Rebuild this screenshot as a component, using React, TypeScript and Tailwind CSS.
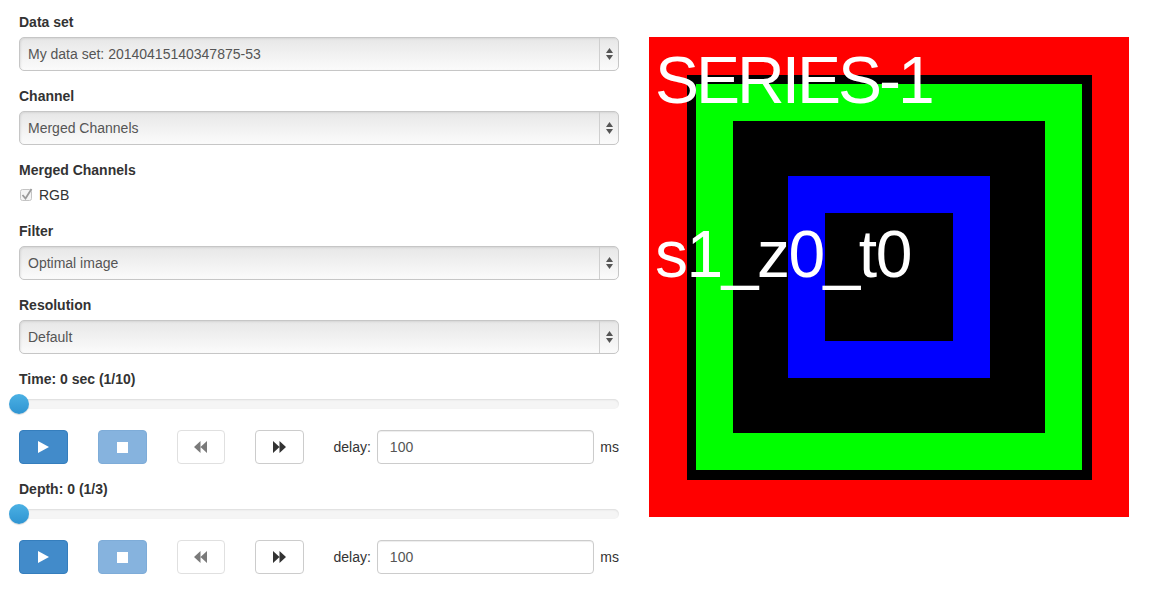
import React from "react";

const font = { fontFamily: '"Liberation Sans", Arial, Helvetica, sans-serif' };

function Select({ value }: { value: string }) {
  return (
    <div className="relative h-[34px] w-[600px] rounded-[5px] border border-[#c6c6c6] bg-gradient-to-b from-[#e7e7e7] via-[#f1f1f1] to-[#fbfbfb] shadow-[inset_1px_1px_2px_rgba(0,0,0,0.08)] flex items-center">
      <span className="pl-[8px] text-[14px] text-[#555] flex-1">{value}</span>
      <div className="h-full w-[19px] border-l border-[#cfcfcf] flex flex-col items-center justify-center gap-[2px]">
        <svg width="7" height="5" viewBox="0 0 7 5"><path d="M3.5 0 L7 5 L0 5 Z" fill="#555" /></svg>
        <svg width="7" height="5" viewBox="0 0 7 5"><path d="M0 0 L7 0 L3.5 5 Z" fill="#555" /></svg>
      </div>
    </div>
  );
}

function Label({ children }: { children: React.ReactNode }) {
  return <div className="h-[20px] leading-[20px] text-[14px] font-bold text-[#333] mb-[5px]">{children}</div>;
}

function Slider() {
  return (
    <div className="relative h-[30px] w-[600px] flex items-center">
      <div className="h-[10px] w-full rounded-[5px] bg-[#f5f5f5] shadow-[inset_0_1px_2px_rgba(0,0,0,0.1)]" />
      <div className="absolute left-[-10px] top-[5px] h-[20px] w-[20px] rounded-full bg-gradient-to-b from-[#4bb1e4] to-[#2f94d1] shadow-[0_1px_1px_rgba(0,0,0,0.15)]" />
    </div>
  );
}

function Controls() {
  return (
    <div className="flex items-center h-[34px]">
      <div className="h-[34px] w-[49px] rounded-[4px] bg-[#428bca] border border-[#357ebd] flex items-center justify-center">
        <svg width="11" height="12" viewBox="0 0 11 12"><path d="M0 0 L11 6 L0 12 Z" fill="#fff" /></svg>
      </div>
      <div className="ml-[30px] h-[34px] w-[49px] rounded-[4px] bg-[#86b3de] border border-[#7eacd8] flex items-center justify-center">
        <div className="h-[11px] w-[11px] bg-white" />
      </div>
      <div className="ml-[30px] h-[34px] w-[48px] rounded-[4px] bg-white border border-[#e0e0e0] flex items-center justify-center">
        <svg width="13" height="12" viewBox="0 0 13 12"><path d="M6.5 0 L0 6 L6.5 12 Z M13 0 L6.5 6 L13 12 Z" fill="#7a7a7a" /></svg>
      </div>
      <div className="ml-[30px] h-[34px] w-[49px] rounded-[4px] bg-white border border-[#cccccc] flex items-center justify-center">
        <svg width="13" height="12" viewBox="0 0 13 12"><path d="M0 0 L6.5 6 L0 12 Z M6.5 0 L13 6 L6.5 12 Z" fill="#333" /></svg>
      </div>
      <span className="ml-[30px] text-[14px] text-[#333]">delay:</span>
      <div className="ml-[6px] h-[34px] w-[218px] rounded-[4px] border border-[#cccccc] bg-white flex items-center pl-[12px] text-[14px] text-[#555] shadow-[inset_0_1px_1px_rgba(0,0,0,0.075)]">
        100
      </div>
      <span className="ml-[6px] text-[14px] text-[#333]">ms</span>
    </div>
  );
}

export default function App() {
  return (
    <div className="w-[1150px] h-[612px] bg-white flex pl-[19px] pt-[12px] text-[#333]" style={font}>
      <div className="w-[600px] flex flex-col">
        <Label>Data set</Label>
        <Select value="My data set: 20140415140347875-53" />
        <div className="mt-[15px]"><Label>Channel</Label></div>
        <Select value="Merged Channels" />
        <div className="mt-[15px]"><Label>Merged Channels</Label></div>
        <div className="h-[20px] flex items-center">
          <svg width="14" height="14" viewBox="0 0 14 14" className="ml-[1px]">
            <rect x="0.5" y="1.5" width="11" height="11" rx="2" fill="#f4f4f4" stroke="#c4c4c4" />
            <path d="M2.5 7 L5.5 10.5 L11.5 1" fill="none" stroke="#9a9a9a" strokeWidth="1.8" />
          </svg>
          <span className="ml-[5px] text-[14px] text-[#333]">RGB</span>
        </div>
        <div className="mt-[16px]"><Label>Filter</Label></div>
        <Select value="Optimal image" />
        <div className="mt-[15px]"><Label>Resolution</Label></div>
        <Select value="Default" />
        <div className="mt-[15px] h-[20px] leading-[20px] text-[14px] font-bold">Time: 0 sec (1/10)</div>
        <Slider />
        <div className="mt-[11px]"><Controls /></div>
        <div className="mt-[15px] h-[20px] leading-[20px] text-[14px] font-bold">Depth: 0 (1/3)</div>
        <Slider />
        <div className="mt-[11px]"><Controls /></div>
      </div>
      <div className="ml-[30px] mt-[25px]">
        <div className="relative w-[480px] h-[480px] bg-[#ff0000] pt-[38px] pl-[38px]">
          <div className="w-[405px] h-[405px] bg-black pt-[9px] pl-[9px]">
            <div className="w-[386px] h-[386px] bg-[#00ff00] pt-[37px] pl-[37px]">
              <div className="w-[312px] h-[312px] bg-black pt-[55px] pl-[55px]">
                <div className="w-[202px] h-[202px] bg-[#0000ff] pt-[37px] pl-[37px]">
                  <div className="w-[128px] h-[128px] bg-black" />
                </div>
              </div>
            </div>
          </div>
          <div className="absolute left-[6px] top-[10px] text-white text-[66px] leading-none tracking-[-3px] whitespace-nowrap">SERIES-1</div>
          <div className="absolute left-[6px] top-[184px] text-white text-[66px] leading-none tracking-[-1.5px] whitespace-nowrap">s1_z0_t0</div>
        </div>
      </div>
    </div>
  );
}
